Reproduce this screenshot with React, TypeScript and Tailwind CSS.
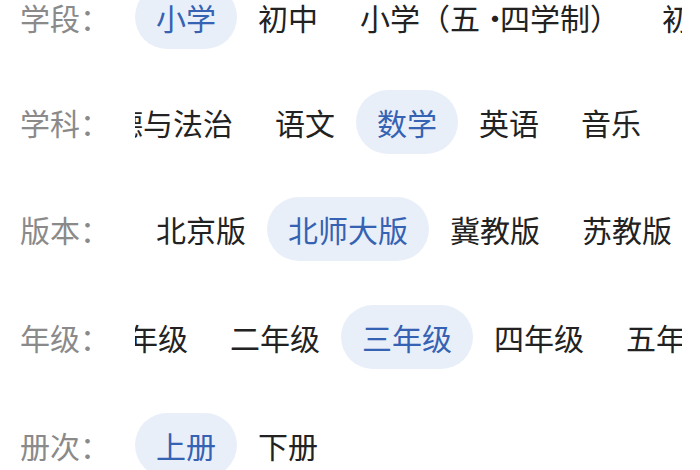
import React from 'react';

type Row = {
  label: string;
  items: string[];
  active: string;
  rowClass: string;
  shiftClass: string;
};

const rows: Row[] = [
  {
    label: '学段',
    items: ['小学', '初中', '小学（五•四学制）', '初中（五•四学制）', '高中'],
    active: '小学',
    rowClass: 'h-[104px]',
    shiftClass: 'ml-0',
  },
  {
    label: '学科',
    items: ['品德与法治', '语文', '数学', '英语', '音乐', '美术'],
    active: '数学',
    rowClass: 'h-[106px]',
    shiftClass: '-ml-[73px]',
  },
  {
    label: '版本',
    items: ['北京版', '北师大版', '冀教版', '苏教版', '人教版'],
    active: '北师大版',
    rowClass: 'h-[108px]',
    shiftClass: 'ml-0',
  },
  {
    label: '年级',
    items: ['一年级', '二年级', '三年级', '四年级', '五年级', '六年级'],
    active: '三年级',
    rowClass: 'h-[108px]',
    shiftClass: '-ml-[58px]',
  },
  {
    label: '册次',
    items: ['上册', '下册'],
    active: '上册',
    rowClass: 'h-[108px]',
    shiftClass: 'ml-0',
  },
];

// the dot between 五 and 四 is narrower than a full CJK cell
function renderText(text: string) {
  const parts = text.split('•');
  if (parts.length === 1) return text;
  return (
    <>
      {parts[0]}
      <span className="inline-block w-[20px] pr-[4px] text-center">•</span>
      {parts[1]}
    </>
  );
}

function Chip({ text, active }: { text: string; active: boolean }) {
  return (
    <div
      className={
        'flex h-[64px] shrink-0 items-center whitespace-nowrap rounded-full px-[21px] ' +
        (active ? 'bg-[#e9eff9] text-[#3562b3]' : 'text-[#222222]')
      }
    >
      {renderText(text)}
    </div>
  );
}

export default function App() {
  return (
    <div className="h-[470px] w-[700px] overflow-hidden bg-white font-['Noto_Sans_CJK_SC',sans-serif] text-[30px] leading-none">
      <div className="-mt-[35px]">
        {rows.map((row) => (
          <div key={row.label} className={'flex items-center ' + row.rowClass}>
            <div className="w-[135px] shrink-0 pl-[20px] text-[#8a8a8a]">{row.label}：</div>
            <div className="w-[547px] shrink-0 overflow-hidden">
              <div className={'flex ' + row.shiftClass}>
                {row.items.map((item) => (
                  <Chip key={item} text={item} active={item === row.active} />
                ))}
              </div>
            </div>
          </div>
        ))}
      </div>
    </div>
  );
}
